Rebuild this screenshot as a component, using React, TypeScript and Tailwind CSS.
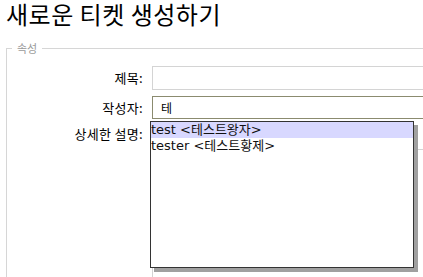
import React from "react";

export default function App() {
  return (
    <div
      className="relative w-[423px] h-[277px] overflow-hidden bg-white text-black"
      style={{ fontFamily: '"DejaVu Sans", "Noto Sans CJK KR", sans-serif' }}
    >
      <h1
        className="-mt-[4px] pl-[6px] text-[24px] leading-[35px] font-normal tracking-[0.5px]"
        style={{ fontFamily: '"Noto Sans CJK KR", sans-serif' }}
      >
        새로운 티켓 생성하기
      </h1>
      <fieldset className="ml-[6px] mt-[11px] w-[460px] h-[300px] border border-[#d6d6d6] p-0">
        <legend
          className="ml-[5px] px-[5px] text-[11px] leading-[12px] text-[#9a9a9a]"
          style={{ fontFamily: '"Noto Sans CJK KR", sans-serif' }}
        >
          속성
        </legend>
        <div
          className="flex flex-col pt-[12px] text-[13px] tracking-[0.3px]"
          style={{ fontFamily: '"Noto Sans CJK KR", sans-serif' }}
        >
          <div className="flex items-center">
            <label className="w-[136px] text-right leading-[16px]">제목:</label>
            <div className="ml-[9px] h-[24px] w-[300px] border border-[#d4d4d4] bg-white" />
          </div>
          <div className="mt-[6px] flex items-center">
            <label className="w-[136px] text-right leading-[16px]">작성자:</label>
            <div className="relative ml-[9px] h-[23px] w-[300px]">
              <div className="h-full w-full border border-[#8b8b6f] bg-white pl-[8px] text-[12px] leading-[21px] tracking-normal">
                테
              </div>
              <ul
                className="absolute left-[-2px] top-[25px] z-10 h-[147px] w-[264px] border border-[#333333] bg-white shadow-[4px_4px_0_#a0a0a0] text-[13px] leading-[16px] tracking-normal"
                style={{ fontFamily: '"DejaVu Sans", "Noto Sans CJK KR", sans-serif' }}
              >
                <li className="h-[16px] bg-[#d8d8ff] text-[#111]">test &lt;테스트왕자&gt;</li>
                <li className="h-[16px] text-[#111]">tester &lt;테스트황제&gt;</li>
              </ul>
            </div>
          </div>
          <div className="mt-[6px] flex items-start">
            <label className="w-[136px] pt-[1px] text-right leading-[16px]">상세한 설명:</label>
            <div className="ml-[9px] mt-[24px] h-[200px] w-[300px] border border-[#d4d4d4] bg-white" />
          </div>
        </div>
      </fieldset>
    </div>
  );
}
